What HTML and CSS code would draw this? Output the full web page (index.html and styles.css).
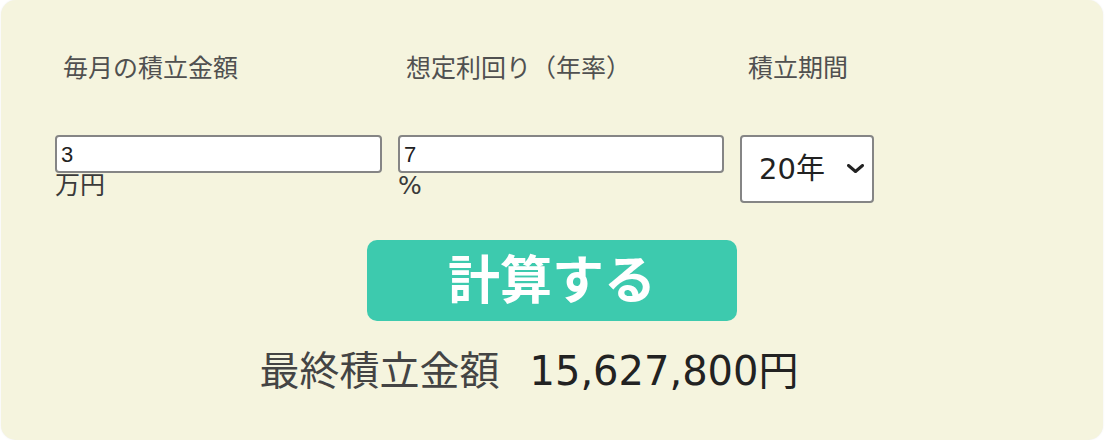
FILE: index.html
```html
<!DOCTYPE html>
<html lang="ja">
<head>
  <meta charset="UTF-8">
  <meta name="viewport" content="width=device-width, initial-scale=1.0">
  <title>積立シミュレーション</title>
  <link rel="stylesheet" href="styles.css">
</head>
<body>
  <div class="calc">
    <div class="fields">
      <label class="label" for="monthly">毎月の積立金額</label>
      <label class="label" for="rate">想定利回り（年率）</label>
      <label class="label" for="years">積立期間</label>

      <div class="field">
        <input class="text-input" id="monthly" type="text" value="3">
        <span class="unit">万円</span>
      </div>
      <div class="field">
        <input class="text-input" id="rate" type="text" value="7">
        <span class="unit">%</span>
      </div>
      <div class="select-wrap">
        <select class="select" id="years">
          <option>5年</option>
          <option>10年</option>
          <option>15年</option>
          <option selected>20年</option>
          <option>25年</option>
          <option>30年</option>
        </select>
        <svg class="chevron" viewBox="0 0 17 9" width="17" height="9">
          <polyline points="1.5,1.5 8.5,7.5 15.5,1.5" fill="none" stroke="#222" stroke-width="3" stroke-linecap="round" stroke-linejoin="round"/>
        </svg>
      </div>
    </div>

    <button class="calc-btn" type="button">計算する</button>

    <p class="result">最終積立金額<span class="result-value">15,627,800円</span></p>
  </div>
</body>
</html>
```

FILE: styles.css
```css
body {
  margin: 0;
  background-color: #fff;
  font-family: "DejaVu Sans", "Noto Sans CJK JP", sans-serif;
}
.calc {
  box-sizing: border-box;
  width: 1102px;
  height: 440px;
  margin-left: 1px;
  padding-top: 56px;
  background-color: #f5f4de;
  border-radius: 15px;
  box-shadow: 0 0 2px rgba(0,0,0,0.08);
}
.fields {
  display: grid;
  grid-template-columns: 327px 326px 134px;
  column-gap: 16px;
  row-gap: 54px;
  padding-left: 54px;
  align-items: start;
}
.label {
  padding-left: 8px;
  font-size: 25px;
  line-height: 25px;
  color: #505050;
}
.field {
  display: flex;
  flex-direction: column;
}
.text-input {
  box-sizing: border-box;
  width: 100%;
  height: 38px;
  margin: 0;
  padding: 2px 4px 0;
  border: 2px solid #858585;
  border-radius: 4px;
  background-color: #fff;
  font-family: "Liberation Sans", sans-serif;
  font-size: 22px;
  color: #222;
}
.unit {
  font-size: 25px;
  line-height: 25px;
  color: #3a3a3a;
}
.select-wrap {
  position: relative;
  width: 134px;
}
.select {
  box-sizing: border-box;
  width: 134px;
  height: 68px;
  margin: 0;
  padding: 0 0 0 17px;
  border: 2px solid #858585;
  border-radius: 4px;
  background-color: #fff;
  -webkit-appearance: none;
  appearance: none;
  font-family: "DejaVu Sans", "Noto Sans CJK JP", sans-serif;
  font-size: 29px;
  color: #222;
}
.chevron {
  position: absolute;
  top: 29px;
  right: 10px;
  pointer-events: none;
}
.calc-btn {
  display: block;
  width: 370px;
  height: 81px;
  margin: 37px auto 0;
  padding: 0 0 8px;
  border: none;
  border-radius: 10px;
  background-color: #3dcaae;
  color: #fff;
  font-family: "Noto Sans CJK JP", sans-serif;
  font-size: 52px;
  font-weight: bold;
  line-height: 1;
  cursor: pointer;
}
.result {
  margin: 30px 0 0;
  padding-right: 46px;
  text-align: center;
  font-size: 40px;
  line-height: 40px;
  color: #444;
}
.result-value {
  margin-left: 30px;
  color: #222;
}
```
